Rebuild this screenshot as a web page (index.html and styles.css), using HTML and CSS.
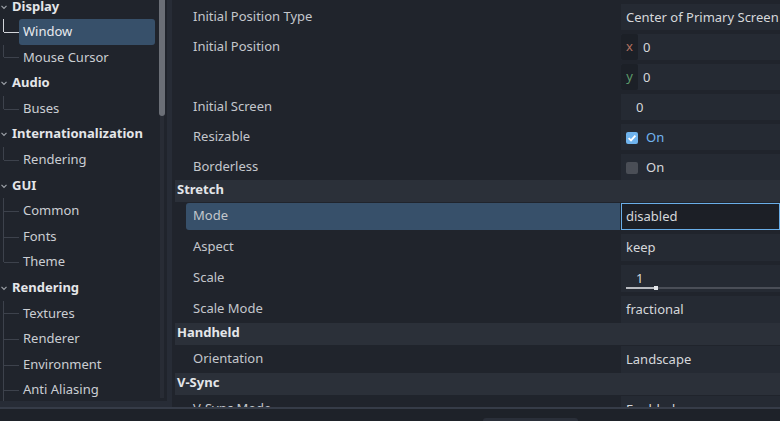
FILE: index.html
```html
<!DOCTYPE html>
<html>
<head>
<meta charset="utf-8">
<link rel="stylesheet" href="styles.css">
</head>
<body>
<div class="main">
  <aside class="tree-panel">
    <ul class="tree">
      <li class="group">
        <div class="head"><svg class="arrow" viewBox="0 0 8 8"><polyline points="1.5,2.8 4,5.3 6.5,2.8"/></svg>Display</div>
        <ul class="children">
          <li class="child active selected">Window</li>
          <li class="child last">Mouse Cursor</li>
        </ul>
      </li>
      <li class="group">
        <div class="head"><svg class="arrow" viewBox="0 0 8 8"><polyline points="1.5,2.8 4,5.3 6.5,2.8"/></svg>Audio</div>
        <ul class="children">
          <li class="child last">Buses</li>
        </ul>
      </li>
      <li class="group">
        <div class="head"><svg class="arrow" viewBox="0 0 8 8"><polyline points="1.5,2.8 4,5.3 6.5,2.8"/></svg>Internationalization</div>
        <ul class="children">
          <li class="child last">Rendering</li>
        </ul>
      </li>
      <li class="group">
        <div class="head"><svg class="arrow" viewBox="0 0 8 8"><polyline points="1.5,2.8 4,5.3 6.5,2.8"/></svg>GUI</div>
        <ul class="children">
          <li class="child">Common</li>
          <li class="child">Fonts</li>
          <li class="child last">Theme</li>
        </ul>
      </li>
      <li class="group">
        <div class="head"><svg class="arrow" viewBox="0 0 8 8"><polyline points="1.5,2.8 4,5.3 6.5,2.8"/></svg>Rendering</div>
        <ul class="children">
          <li class="child">Textures</li>
          <li class="child">Renderer</li>
          <li class="child">Environment</li>
          <li class="child more">Anti Aliasing</li>
        </ul>
      </li>
    </ul>
    <div class="scroll"><div class="thumb"></div><div class="track"></div></div>
  </aside>

  <section class="inspector">
    <div class="props">
      <div class="prop"><div class="label">Initial Position Type</div><div class="value">Center of Primary Screen</div></div>
      <div class="prop"><div class="label">Initial Position</div><div class="value vec"><span class="axis ax-x">x</span>0</div></div>
      <div class="prop"><div class="label"></div><div class="value vec"><span class="axis ax-y">y</span>0</div></div>
      <div class="prop"><div class="label">Initial Screen</div><div class="value spin">0</div></div>
      <div class="prop"><div class="label">Resizable</div><div class="value"><span class="check on"><svg viewBox="0 0 12 12"><polyline points="2.6,6.2 5,8.4 9.4,3.6"/></svg></span><span class="on-text">On</span></div></div>
      <div class="prop"><div class="label">Borderless</div><div class="value"><span class="check"></span>On</div></div>

      <div class="section">Stretch</div>
      <div class="prop tall selected"><div class="label">Mode</div><div class="value editing">disabled</div></div>
      <div class="prop tall"><div class="label">Aspect</div><div class="value">keep</div></div>
      <div class="prop tall"><div class="label">Scale</div><div class="value slider"><div class="num">1</div><div class="bar"><span class="fill"></span><span class="grab"></span></div></div></div>
      <div class="prop tall"><div class="label">Scale Mode</div><div class="value">fractional</div></div>

      <div class="section">Handheld</div>
      <div class="prop tall"><div class="label">Orientation</div><div class="value">Landscape</div></div>

      <div class="section">V-Sync</div>
      <div class="prop tall"><div class="label">V-Sync Mode</div><div class="value">Enabled</div></div>
    </div>
  </section>
</div>
<footer class="footer"><div class="tab"></div></footer>
</body>
</html>
```

FILE: styles.css
```css
* { box-sizing: border-box; margin: 0; padding: 0; }
html, body { width: 780px; height: 421px; overflow: hidden; }
body {
  background: #1e2229;
  font-family: "Noto Sans", "Open Sans", sans-serif;
  font-size: 13px;
  color: #cdd0d5;
}
ul { list-style: none; }

.main {
  display: flex;
  height: 407px;
  background: #272c36;
  overflow: hidden;
}

/* ---------- tree ---------- */
.tree-panel {
  width: 167px;
  height: 401px;
  background: #20242c;
  display: flex;
  overflow: hidden;
  flex-shrink: 0;
}
.tree {
  width: 159px;
  padding-right: 4px;
  margin-top: -6.5px;
}
.head {
  height: 25.6px;
  line-height: 25.6px;
  padding-left: 12px;
  font-weight: bold;
  color: #e4e6e9;
  position: relative;
}
.arrow {
  position: absolute;
  left: 0;
  top: 9px;
  width: 8px;
  height: 8px;
  fill: none;
  stroke: #9da1a8;
  stroke-width: 1.2;
}
.children { margin-left: 3px; }
.child {
  position: relative;
  height: 25.6px;
  line-height: 25.6px;
  margin-left: 16px;
  padding-left: 4px;
  color: #cbced3;
}
.child::before {
  content: "";
  position: absolute;
  left: -16px;
  top: 0;
  height: 100%;
  border-left: 1px solid #3d424c;
}
.child.last::before { height: 50%; }
.child.more::before { height: 200%; }
.child::after {
  content: "";
  position: absolute;
  left: -15px;
  top: 50%;
  width: 15px;
  border-top: 1px solid #3d424c;
}
.child.active::before { border-color: #d2d5da; height: 50%; }
.child.active::after { border-color: #d2d5da; }
.child.selected {
  background: #37506a;
  border-radius: 3px;
  color: #e8eaee;
}

.scroll {
  width: 6px;
  display: flex;
  flex-direction: column;
}
.thumb {
  height: 116px;
  background: #6b6f77;
  border-radius: 0 0 3px 3px;
}
.track {
  flex: 1;
  margin: 0 1px 3px;
  background: #282c35;
}

/* ---------- inspector ---------- */
.inspector {
  flex: 1;
  margin-left: 5px;
  background: #20242c;
  overflow: hidden;
}
.props {
  display: flex;
  flex-direction: column;
}
.prop {
  display: grid;
  grid-template-columns: 448px 1fr;
  column-gap: 1px;
  height: 26px;
  margin-top: 4px;
  flex-shrink: 0;
}
.prop.tall { height: 27px; }
.label {
  padding-left: 21px;
  line-height: 24px;
  color: #c4c7cc;
  white-space: nowrap;
}
.value {
  background: #252a33;
  padding: 0 0 1px 5px;
  display: flex;
  align-items: center;
  color: #d6d8db;
  white-space: nowrap;
  overflow: hidden;
}
.section {
  margin: 0 0 0 3px;
  height: 22px;
  line-height: 19px;
  padding-left: 2px;
  background: #2b3039;
  font-weight: bold;
  color: #e4e6e9;
  flex-shrink: 0;
}
.section + .prop { margin-top: 1px; }

.prop.selected .label {
  margin-left: 14px;
  padding-left: 7px;
  background: #37506a;
  border-radius: 3px 0 0 3px;
}
.value.editing {
  border: 1px solid #6aaee8;
  padding: 0 0 1px 4px;
  background: #1c1f26;
}

.value.vec { padding-left: 0; padding-bottom: 0; }
.axis {
  width: 17px;
  height: 100%;
  background: #1c2027;
  margin-right: 5px;
  padding-bottom: 2px;
  display: flex;
  align-items: center;
  justify-content: center;
  border-radius: 2px;
}
.ax-x { color: #b3705f; }
.ax-y { color: #5e9b6a; }

.value.spin { padding-left: 15px; }

.check {
  width: 12px;
  height: 12px;
  border-radius: 2px;
  background: #4a4e56;
  margin: 2px 8px 0 0;
  display: inline-flex;
}
.check.on { background: #70b4ee; }
.check svg {
  width: 12px;
  height: 12px;
  fill: none;
  stroke: #ffffff;
  stroke-width: 1.8;
}
.on-text { color: #72b6f0; }

.value.slider {
  display: block;
  padding: 0;
}
.num {
  padding: 4px 0 0 15px;
  line-height: 18px;
  height: 22px;
}
.bar {
  margin-left: 5px;
  height: 2px;
  background: #4a4e57;
  display: flex;
}
.fill { width: 28px; background: #b8bbc0; }
.grab {
  width: 4px;
  height: 4px;
  margin-top: -1px;
  background: #e2e4e7;
}

/* ---------- footer ---------- */
.footer {
  height: 14px;
  border-top: 2px solid #363c48;
  background: #1e2229;
  padding: 9px 0 0 483px;
}
.tab {
  width: 95px;
  height: 3px;
  background: #2a2f39;
  border-radius: 3px 3px 0 0;
}
```
